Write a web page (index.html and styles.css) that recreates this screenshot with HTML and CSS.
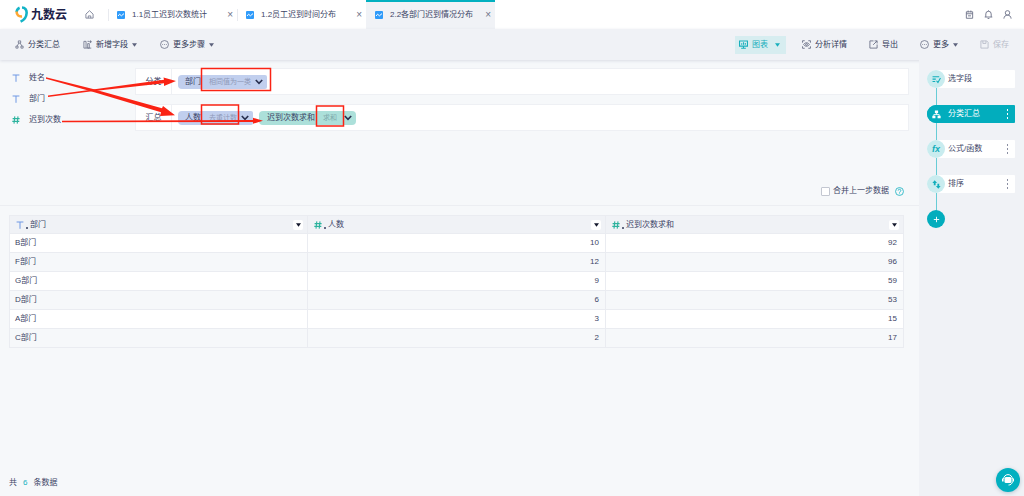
FILE: index.html
```html
<!DOCTYPE html>
<html lang="zh-CN">
<head>
<meta charset="utf-8">
<meta name="viewport" content="width=device-width, initial-scale=1">
<title>九数云</title>
<link rel="stylesheet" href="styles.css">
</head>
<body>
<svg class="sprite" aria-hidden="true">
  <symbol id="i-chart" viewBox="0 0 8 8"><rect width="8" height="8" rx="1" fill="#2f9bfa" stroke="none"/><path d="M1 5 2.600 3.200 4.400 4.800 7 2.600" fill="none" stroke="#fff"/></symbol>
  <symbol id="i-tree" viewBox="0 0 10 10"><path d="M3.700 1h2.600v2.400H3.700zM1 6.800h2.400V9H1zM6.600 6.800H9V9H6.600zM4.400 3.400 2.200 6.800M5.600 3.400 7.800 6.800" stroke-width=".9"/></symbol>
  <symbol id="i-tree-solid" viewBox="0 0 10 10"><path d="M3.200.5h3.600v3.200H3.200zM.4 6.300h3.400v3H.4zM6.200 6.300h3.400v3H6.200z" fill="currentColor" stroke="none"/><path d="M5 3.500v1.600M2 6.500V5.100h6v1.400"/></symbol>
  <symbol id="i-more" viewBox="0 0 10 10"><circle cx="5" cy="5" r="4.400" stroke-width=".9"/><path d="M2.600 5h.8M4.600 5h.8M6.600 5h.8"/></symbol>
  <symbol id="i-caret" viewBox="0 0 6 4"><path d="M0 0h6L3 4z" fill="currentColor" stroke="none"/></symbol>
  <symbol id="i-down" viewBox="0 0 8 6"><path d="M.8 1 4 4.400 7.200 1" stroke-width="1.600"/></symbol>
  <symbol id="i-text" viewBox="0 0 8 8"><path d="M.6 1h6.800M4 1v6.800"/></symbol>
  <symbol id="i-hash" viewBox="0 0 8 8"><path d="M2.800.4 2 7.600M6 .4 5.200 7.600M.6 2.600h7M.3 5.400h7" stroke-width="1.100"/></symbol>
</svg>

<header class="topbar">
  <a class="logo" href="#">
    <svg class="logo-mark" viewBox="0 0 13 17"><path d="M4.600 1.700A5 5 0 0 0 1.600 6" fill="none" stroke="#16b4c8" stroke-width="2.600"/><path d="M1.600 5.600C1.600 8.800 3.600 10.800 7 10.400" fill="none" stroke="#ffa733" stroke-width="2.600"/><path d="M7 1.500C10 1.600 11.900 4 11.600 7.200 11.400 11 9 14 5.600 15.600" fill="none" stroke="#13b3c6" stroke-width="2.600"/></svg>
    <span>九数云</span>
  </a>
  <a class="home" href="#" aria-label="首页"><svg class="icon" viewBox="0 0 10 10"><path d="M1 4.600 5 .8 9 4.600V9H1zM3.600 9V6.600h2.800V9"/></svg></a>
  <nav class="tabs">
    <div class="tab"><svg class="tab-icon"><use href="#i-chart"/></svg><a href="#">1.1员工迟到次数统计</a><button class="close" aria-label="关闭">×</button></div>
    <div class="tab"><svg class="tab-icon"><use href="#i-chart"/></svg><a href="#">1.2员工迟到时间分布</a><button class="close" aria-label="关闭">×</button></div>
    <div class="tab active"><svg class="tab-icon"><use href="#i-chart"/></svg><a href="#">2.2各部门迟到情况分布</a><button class="close" aria-label="关闭">×</button></div>
  </nav>
  <div class="account">
    <button aria-label="文档"><svg class="icon" viewBox="0 0 10 10"><path d="M1.500 2h7v7.200h-7zM1.500 4.200h7M3.500.6v2M6.500.6v2M3.300 6.500h3.400"/></svg></button>
    <button aria-label="通知"><svg class="icon" viewBox="0 0 10 10"><path d="M.8 7.800h8.400M2 7.800V4.400a3 3 0 0 1 6 0v3.400M5 .4v1M4 9.400h2"/></svg></button>
    <button aria-label="用户"><svg class="icon" viewBox="0 0 10 10"><circle cx="5" cy="3.200" r="2.500"/><path d="M1 9.600C1.200 7 2.800 5.700 5 5.700S8.800 7 9 9.600"/></svg></button>
  </div>
</header>

<div class="toolbar">
  <div class="tools tools-left">
    <button><svg class="icon"><use href="#i-tree"/></svg>分类汇总</button>
    <button><svg class="icon" viewBox="0 0 10 10"><path d="M1 1.500h2.400v7.500H1zM5.200 4H7v5H5.200V4M3.400 9h5.800M5 1.500h2M8.400.4v3M7 1.900h2.800" stroke-width=".9"/></svg>新增字段<svg class="caret"><use href="#i-caret"/></svg></button>
    <button><svg class="icon"><use href="#i-more"/></svg>更多步骤<svg class="caret"><use href="#i-caret"/></svg></button>
  </div>
  <div class="tools tools-right">
    <button class="chart-btn"><svg class="icon" viewBox="0 0 10 10"><path d="M.6 1.200h8.800v5.600H.6zM5 6.800v2M2.400 9.200h5.200M3 5.400V3.600M5 5.400V2.600M7 5.400V3.200" stroke-width="1.200"/></svg>图表<svg class="caret"><use href="#i-caret"/></svg></button>
    <button><svg class="icon" viewBox="0 0 10 10"><path d="M.6 3V.8H3M7 .8h2.400V3M9.400 7v2.200H7M3 9.200H.6V7M1.800 5C3.400 2.400 6.600 2.400 8.200 5 6.600 7.600 3.400 7.600 1.800 5z"/><circle cx="5" cy="5" r="1"/></svg>分析详情</button>
    <button><svg class="icon" viewBox="0 0 10 10"><path d="M5 1H1v8h8V5M6.200 1H9v2.800M9 1 4.600 5.400"/></svg>导出</button>
    <button><svg class="icon"><use href="#i-more"/></svg>更多<svg class="caret"><use href="#i-caret"/></svg></button>
    <button class="save" disabled><svg class="icon" viewBox="0 0 10 10"><path d="M1 1h6.400L9 2.600V9H1zM3.200 1v2.800h3.400V1"/></svg>保存</button>
  </div>
</div>

<main class="workspace">
  <section class="content">
    <div class="config">
      <ul class="fields">
        <li><svg class="type text"><use href="#i-text"/></svg>姓名</li>
        <li><svg class="type text"><use href="#i-text"/></svg>部门</li>
        <li><svg class="type num"><use href="#i-hash"/></svg>迟到次数</li>
      </ul>
      <div class="groups">
        <div class="group">
          <div class="group-name">分类</div>
          <div class="chips"><button class="chip">部门<span class="mode">相同值为一类</span><svg class="down"><use href="#i-down"/></svg></button></div>
        </div>
        <div class="group">
          <div class="group-name">汇总</div>
          <div class="chips"><button class="chip">人数<span class="mode">去重计数</span><svg class="down"><use href="#i-down"/></svg></button><button class="chip green">迟到次数求和<span class="mode">求和</span><svg class="down"><use href="#i-down"/></svg></button></div>
        </div>
      </div>
      <div class="merge">
        <label><input type="checkbox">合并上一步数据</label>
        <svg class="help" viewBox="0 0 10 10"><circle cx="5" cy="5" r="4.400"/><path d="M3.500 4a1.500 1.500 0 1 1 2.300 1.200C5.200 5.500 5 5.700 5 6.300M5 7.200v.8"/></svg>
      </div>
      <svg class="marks" viewBox="0 0 380 80" aria-hidden="true">
        <path d="M46 17.300 92 28.800 162 48.200 163 46 175 55.300 160 56 161 52.300 91 31.200 46 18.700Z"/>
        <path d="M48 35.500 91 29.800 164 19.800 163.500 17.500 176 21 164 26 164 23.200 92 31.300 48 37Z"/>
        <path d="M62 60.700 253 60V57.800L263 60.700 253 63.800V62L62 62.200Z"/>
        <g class="frames"><rect x="201.500" y="8.500" width="69" height="22"/><rect x="201.500" y="45" width="37" height="19"/><rect x="316.500" y="46" width="27" height="20"/></g>
      </svg>
    </div>

    <div class="result">
      <table class="grid">
        <thead><tr>
          <th><div class="head"><svg class="type text"><use href="#i-text"/></svg><i></i>部门<button class="filter" aria-label="筛选"><svg class="caret"><use href="#i-caret"/></svg></button></div></th>
          <th><div class="head"><svg class="type num"><use href="#i-hash"/></svg><i></i>人数<button class="filter" aria-label="筛选"><svg class="caret"><use href="#i-caret"/></svg></button></div></th>
          <th><div class="head"><svg class="type num"><use href="#i-hash"/></svg><i></i>迟到次数求和<button class="filter" aria-label="筛选"><svg class="caret"><use href="#i-caret"/></svg></button></div></th>
        </tr></thead>
        <tbody>
          <tr><td>B部门</td><td>10</td><td>92</td></tr>
          <tr><td>F部门</td><td>12</td><td>96</td></tr>
          <tr><td>G部门</td><td>9</td><td>59</td></tr>
          <tr><td>D部门</td><td>6</td><td>53</td></tr>
          <tr><td>A部门</td><td>3</td><td>15</td></tr>
          <tr><td>C部门</td><td>2</td><td>17</td></tr>
        </tbody>
      </table>
      <footer class="count"><span>共</span><b>6</b><span>条数据</span></footer>
    </div>
  </section>

  <aside class="steps">
    <div class="step"><span class="node"><svg class="icon" viewBox="0 0 10 10"><path d="M.6 2h7.400M.6 4.600h3.600M.6 7.200h3M5 6.400 6.600 8.400 9.400 3.400" stroke-width="1.200"/></svg></span><a href="#">选字段</a></div>
    <div class="step current"><span class="node"><svg class="icon"><use href="#i-tree-solid"/></svg></span><a href="#">分类汇总</a><button class="dots" aria-label="更多"><i></i><i></i><i></i></button></div>
    <div class="step"><span class="node fx">fx</span><a href="#">公式/函数</a><button class="dots" aria-label="更多"><i></i><i></i><i></i></button></div>
    <div class="step"><span class="node"><svg class="icon" viewBox="0 0 10 10"><path d="M3 .4 5.600 3.400H4V5.800H2V3.400H.4zM7 9.600 4.400 6.600H6V4.200H8V6.600H9.600z" fill="currentColor" stroke="none"/></svg></span><a href="#">排序</a><button class="dots" aria-label="更多"><i></i><i></i><i></i></button></div>
    <button class="add" aria-label="添加步骤"><svg class="icon" viewBox="0 0 10 10"><path d="M5 2v6M2 5h6"/></svg></button>
  </aside>
</main>

<button class="chat" aria-label="客服"><svg viewBox="0 0 14 14"><path d="M2.600 6a4.400 4.400 0 0 1 8.800 0M11.600 8.500C11 11 9.500 12 7.500 12" fill="none" stroke="#fff"/><rect x="3.500" y="4" width="7" height="6" rx="1.500" fill="#fff"/><path d="M1 5.500h1.600v3H1zM11.400 5.500H13v3h-1.600z" fill="#fff"/></svg></button>
</body>
</html>
```
FILE: styles.css
```css
* { box-sizing: border-box; }

body {
  margin: 0;
  min-height: 100vh;
  display: flex;
  flex-direction: column;
  background: #f6f8fa;
  color: #3d4566;
  font: 8px/12px "Liberation Sans", "Noto Sans CJK SC", sans-serif;
}

button {
  display: flex;
  align-items: center;
  padding: 0;
  border: 0;
  background: none;
  color: inherit;
  font: inherit;
  white-space: nowrap;
}

a { color: inherit; text-decoration: none; white-space: nowrap; }
svg { display: block; flex: none; }
.icon, .type, .down, .help { fill: none; stroke: currentColor; }
.sprite { position: absolute; width: 0; height: 0; }
.icon { width: 9px; height: 9px; stroke-width: 1; }
.caret { width: 5px; height: 4px; }
.type { width: 8px; height: 8px; }
.type.text { color: #6f98e4; }
.type.num { color: #2db39e; }

/* Top bar */
.topbar { display: flex; align-items: center; height: 29px; background: #fff; }
.logo { display: flex; align-items: center; gap: 3px; width: 69px; padding-left: 15px; color: #1d2148; font-size: 12px; font-weight: 700; }
.logo-mark { width: 13px; height: 17px; }
.home { width: 39px; padding-left: 16px; color: #7a8096; }
.tabs { display: flex; align-self: stretch; flex: 1; }
.tab {
  position: relative;
  display: flex;
  align-items: center;
  gap: 7px;
  width: 129px;
  padding: 0 4px 0 9px;
}
.tab:not(.active)::before { content: ""; position: absolute; left: 0; top: 9px; height: 12px; border-left: 1px solid #e8eaef; }
.tab.active { background: #f0f2f6; box-shadow: inset 0 2px #02b0c0; }
.tab-icon { width: 8px; height: 8px; }
.close { margin-left: auto; color: #6c7288; font-size: 10px; }
.account { display: flex; gap: 10px; padding-right: 12px; color: #6c7288; }

/* Toolbar */
.toolbar {
  position: relative;
  display: flex;
  align-items: center;
  justify-content: space-between;
  height: 31px;
  padding: 0 15px;
  background: #f0f2f6;
  box-shadow: 0 1px 3px #d9dce4;
}
.tools, .tools button { display: flex; align-items: center; }
.tools button { gap: 4px; }
.tools .icon { color: #6c7288; }
.tools .caret { color: #5c627c; }
.tools-left { gap: 23px; color: #323956; }
.tools-right { gap: 22px; color: #323956; }
.tools .chart-btn { height: 18px; margin-right: -6px; padding: 0 6px 0 4px; background: #d7edf0; color: #19afbd; }
.tools .chart-btn .icon, .tools .chart-btn .caret { color: #19afbd; }
.chart-btn .caret { margin-left: 3px; }
.tools .save, .tools .save .icon { color: #b9bdca; }

/* Workspace */
.workspace { flex: 1; display: grid; grid-template-columns: minmax(0, 1fr) 105px; }
.content { display: flex; flex-direction: column; }
.config {
  position: relative;
  display: grid;
  grid-template-columns: 126px minmax(0, 1fr);
  grid-template-rows: 1fr auto;
  height: 146px;
  padding: 8px 10px 8px 9px;
  border-bottom: 1px solid #eceef2;
}
.fields { display: flex; flex-direction: column; gap: 9px; margin: 0; padding: 4px 3px; list-style: none; }
.fields li { display: flex; align-items: center; gap: 9px; }
.groups { display: flex; flex-direction: column; gap: 9px; }
.group { display: flex; height: 27px; border: 1px solid #eef0f4; background: #fff; }
.group-name { display: grid; place-items: center; width: 36px; border-right: 1px solid #eef0f4; }
.chips { display: flex; align-items: center; gap: 6px; padding-left: 6px; }
.chip { height: 14px; padding: 0 4px 0 7px; border-radius: 4px 2px 2px 4px; background: #c1cfee; }
.chip.green { padding-left: 8px; border-radius: 4px; background: #ace0da; }
.mode { margin: 0 4px 0 8px; color: #8f99b8; font-size: 7px; }
.green .mode { margin-right: 7px; color: #7fa9ac; }
.down { width: 8px; height: 6px; color: #28304f; }
.merge { grid-column: 1 / -1; display: flex; justify-content: flex-end; align-items: center; gap: 6px; padding-right: 5px; }
.merge label { display: flex; align-items: center; gap: 3px; }
.merge input { appearance: none; width: 9px; height: 9px; margin: 0; border: 1px solid #c3c7d1; border-radius: 1px; background: #fff; }
.help { width: 9px; height: 9px; color: #2bb8c6; }
.marks { position: absolute; left: 0; top: 0; width: 380px; height: 80px; fill: #fa2314; pointer-events: none; }
.frames { fill: none; stroke: #fa2314; stroke-width: 1.5; }

/* Result table */
.result { flex: 1; display: flex; flex-direction: column; padding: 9px 15px 7px 9px; }
.grid { width: 100%; table-layout: fixed; border-collapse: separate; border-spacing: 0; border: solid #eaecf1; border-width: 1px 0 0 1px; }
.grid th, .grid td { height: 19px; padding: 0 6px 0 5px; border: solid #eaecf1; border-width: 0 1px 1px 0; font-weight: 400; text-align: right; }
.grid th { height: 18px; padding-left: 6px; background: #f0f2f6; }
.grid td { background: #fff; }
.grid tr:nth-child(even) td { background: #f6f8fa; }
.grid td:first-child { text-align: left; }
.head { display: flex; align-items: center; }
.head i { align-self: flex-end; width: 2px; height: 2px; margin: 0 2px 2px; background: #626982; }
.filter { justify-content: center; width: 10px; height: 10px; margin-left: auto; margin-right: -2px; border-radius: 2px; background: #fff; color: #14182c; }
.count { display: flex; gap: 6px; margin-top: auto; }
.count b { color: #14b1c0; font-weight: 400; }

/* Step list */
.steps { position: relative; display: flex; flex-direction: column; gap: 17px; padding: 10px 9px 0 8px; background: #f0f2f6; }
.steps::before { content: ""; position: absolute; left: 17px; top: 19px; height: 142px; border-left: 1px solid #67ccd6; }
.step { position: relative; display: flex; align-items: center; height: 18px; border-radius: 9px 1px 1px 9px; background: #fff; }
.node { display: grid; place-items: center; width: 18px; height: 18px; margin-right: 3px; border-radius: 50%; background: #c9ecef; color: #12aebb; }
.fx { font: italic bold 9px/18px "Liberation Sans", sans-serif; }
.step.current, .current .node { background: #02adbd; color: #fff; }
.dots { flex-direction: column; gap: 2px; margin: 0 7px 0 auto; }
.dots i { width: 1px; height: 2px; background: currentColor; opacity: .6; }
.current .dots i { opacity: 1; }
.add { position: relative; justify-content: center; width: 18px; height: 18px; border-radius: 50%; background: #02adbd; color: #fff; }

.chat { position: fixed; right: 4px; bottom: 4px; justify-content: center; width: 24px; height: 24px; border-radius: 50%; background: #02b0c0; box-shadow: 0 1px 4px #b8c4d0; }
.chat svg { width: 14px; height: 14px; }
```
